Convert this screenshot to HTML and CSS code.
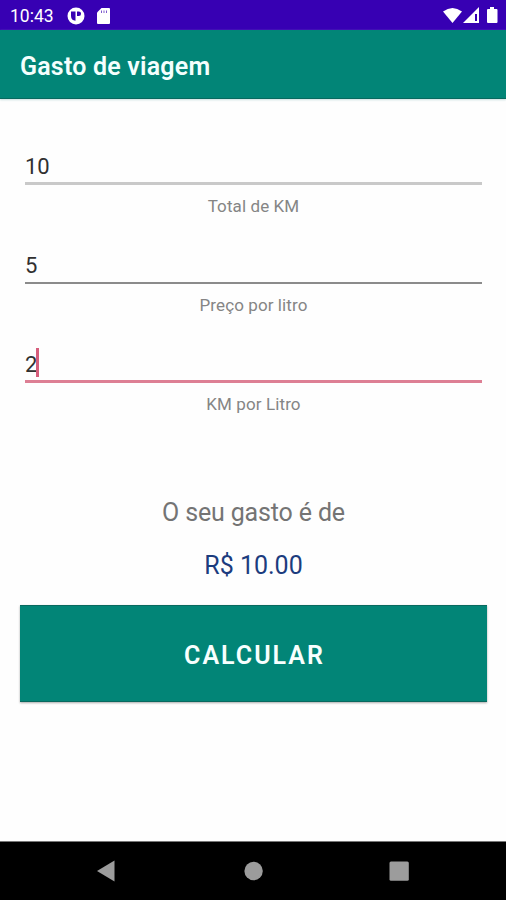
FILE: index.html
```html
<!DOCTYPE html>
<html lang="pt-BR">
<head>
<meta charset="utf-8">
<title>Gasto de viagem</title>
<link rel="stylesheet" href="styles.css">
</head>
<body>
<div class="screen">
  <header class="status">
    <span class="clock">10:43</span>
    <svg class="status-app" width="18" height="18" viewBox="0 0 18 18"><circle cx="9" cy="9" r="8.500" fill="#fff"/><path d="M4 4.500H8.500V13.800A5 5 0 0 1 4 9ZM10 4.500H11.800A2.200 2.200 0 0 1 11.800 9H10Z" fill="#3700b3"/></svg>
    <svg class="status-card" width="13" height="16" viewBox="0 0 13 16"><path d="M4.5 0H12Q13 0 13 1V15Q13 16 12 16H1Q0 16 0 15V4.5Z" fill="#fff"/><path d="M4.5 2.5V5M7 2.5V5M9.5 2.5V5" stroke="#3700b3" stroke-width="1" opacity=".65"/></svg>
    <svg class="status-signal" width="56" height="18" viewBox="0 0 56 18"><path d="M0 4.500Q9.500 -2.500 19 4.500L9.500 16Z" fill="#fff"/><path d="M20 16L36 0V16Z" fill="#fff"/><path d="M32 7H34V14H32Z" fill="#3700b3"/><path d="M47 0H51V2H53.500Q54.500 2 54.500 3V15Q54.500 16 53.500 16H45Q44 16 44 15V3Q44 2 45 2H47Z" fill="#fff"/></svg>
  </header>
  <div class="appbar"><h1>Gasto de viagem</h1></div>
  <main>
    <div class="field">
      <div class="input soft"><span>10</span></div>
      <div class="label">Total de KM</div>
    </div>
    <div class="field">
      <div class="input thin"><span>5</span></div>
      <div class="label">Preço por litro</div>
    </div>
    <div class="field">
      <div class="input active"><span>2</span><i class="caret"></i></div>
      <div class="label">KM por Litro</div>
    </div>
    <div class="caption">O seu gasto é de</div>
    <div class="amount">R$ 10.00</div>
    <button class="calc" type="button"><span>CALCULAR</span></button>
  </main>
  <nav class="nav">
    <svg width="506" height="58" viewBox="0 0 506 58"><path d="M97 29L114.500 18.500V39.500Z" fill="#9c9c9c"/><circle cx="253.600" cy="29" r="9.200" fill="#9c9c9c"/><rect x="389.500" y="19.500" width="19.300" height="19.300" rx="1.500" fill="#9c9c9c"/></svg>
  </nav>
</div>
</body>
</html>
```
FILE: styles.css
```css
* { box-sizing: border-box; }
body { margin: 0; background: #fefefe; font-family: Roboto, sans-serif; }
.screen { width: 506px; height: 900px; display: flex; flex-direction: column; overflow: hidden; }
.status { height: 30px; flex: none; display: flex; align-items: center; padding: 1px 7px 0 10px; background: #3700b3; color: #fff; }
.clock { width: 57px; font-size: 17.5px; line-height: 20px; font-weight: 400; white-space: nowrap; }
.status-card { margin-left: 12px; }
.status-signal { margin-left: auto; }
.appbar { height: 69px; flex: none; display: flex; align-items: center; padding: 5px 20px 0; background: #028577; border-bottom: 1px solid #08695f; box-shadow: 0 1px 2px #c9dfdf; }
h1 { margin: 0; font-size: 25px; line-height: 30px; font-weight: 600; letter-spacing: .2px; color: #f4fffd; white-space: nowrap; }
main { flex: 1; display: flex; flex-direction: column; padding: 47px 19px 0 20px; }
.field { height: 99px; flex: none; padding: 0 5px; }
.input { height: 39px; display: flex; align-items: center; font-size: 22px; line-height: 30px; color: #303030; padding-top: 6px; }
.soft { border-bottom: 3px solid #c9c9c9; }
.thin { border-bottom: 2px solid #8b8b8b; padding-top: 5px; }
.active { border-bottom: 3px solid #dd7f94; }
.caret { width: 3px; height: 29px; background: #d65e7c; margin: -5px 0 0 -1px; }
.label { margin-top: 10px; text-align: center; font-size: 17px; line-height: 22px; letter-spacing: .1px; color: #858585; white-space: nowrap; }
.caption { margin-top: 55px; text-align: center; font-size: 25px; line-height: 30px; letter-spacing: -.15px; color: #747474; }
.amount { margin-top: 23px; text-align: center; font-size: 25px; line-height: 30px; color: #1c3c7e; }
.calc { margin: 24px 0 0; height: 97px; flex: none; border: 0; border-top: 1px solid #08695f; border-bottom: 1px solid #08695f; padding: 4px 0 0 2px; background: #028577; color: #f8fffe; font: 600 25px/30px Roboto, sans-serif; letter-spacing: 2px; box-shadow: 0 1px 2px #aaa; }
.nav { height: 59px; flex: none; background: #000; border-top: 1px solid #777; }
.nav svg { display: block; }
```
